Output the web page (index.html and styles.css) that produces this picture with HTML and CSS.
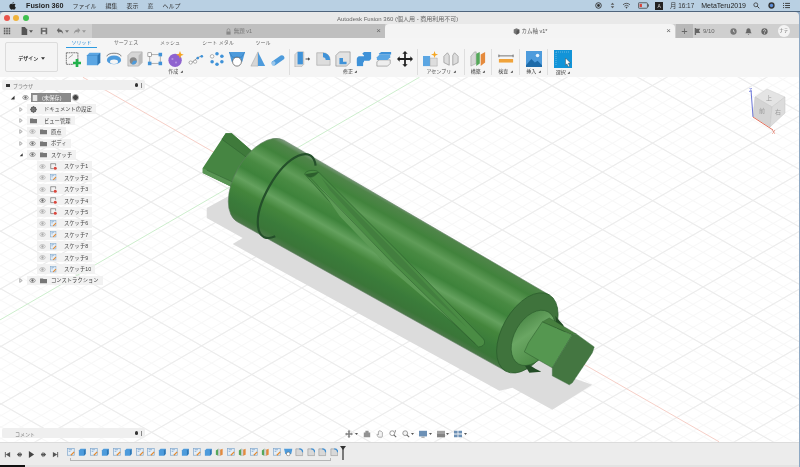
FILE: index.html
```html
<!DOCTYPE html>
<html lang="ja">
<head>
<meta charset="utf-8">
<title>Autodesk Fusion 360</title>
<link rel="stylesheet" href="styles.css">
</head>
<body>
<svg class="defs" aria-hidden="true">
  <defs>
    <symbol id="eye" viewBox="0 0 12 8"><path d="M.5 4C2.500 1 4.300.6 6 .6S9.500 1 11.500 4C9.500 7 7.700 7.400 6 7.400S2.500 7 .5 4Z" fill="#e8e8e8" stroke="currentColor" stroke-width="1"/><circle cx="6" cy="4" r="2" fill="currentColor"/></symbol>
    <symbol id="folder" viewBox="0 0 10 8"><path d="M0 1h4l1 1h5v6H0Z" fill="#777"/></symbol>
    <symbol id="arrow" viewBox="0 0 6 8"><path d="M1 1l4 3-4 3Z" fill="#f4f4f4" stroke="#777" stroke-width=".9"/></symbol>
    <symbol id="down" viewBox="0 0 6 6"><path d="M5.500 1v4.500H1Z" fill="#333"/></symbol>
    <symbol id="gear" viewBox="0 0 10 10"><circle cx="5" cy="5" r="3.200" fill="none" stroke="#666" stroke-width="2"/><path d="M5 0v10M0 5h10M1.500 1.500l7 7M8.500 1.500l-7 7" stroke="#666" stroke-width="1.200"/></symbol>
    <symbol id="sklock" viewBox="0 0 10 10"><path d="M1 1h7M1 1v7M1 8h4M8 1v3" stroke="#555" stroke-width=".8" fill="none"/><circle cx="7.500" cy="7.500" r="2.200" fill="#d9463c"/></symbol>
    <symbol id="skedit" viewBox="0 0 10 10"><rect x=".5" y=".5" width="8" height="8" fill="#e6eef6" stroke="#7fa6cc" stroke-width=".8"/><path d="M2 2h4M2 4h2" stroke="#6a9ccb" stroke-width=".8"/><path d="M4 8l4-4 1 1-4 4Z" fill="#e58a2e"/></symbol>
    <symbol id="extr" viewBox="0 0 10 10"><path d="M1 3l2-2h6v6l-2 2H1Z" fill="#4d9bdc"/><path d="M7 3l2-2v6l-2 2Z" fill="#2f77b5"/></symbol>
    <symbol id="plane" viewBox="0 0 10 10"><path d="M1 3l3-2v8L1 8Z" fill="#55a85a"/><path d="M6 2l3-1v7L6 9Z" fill="#e58a3c"/><path d="M4 1l2 1v7L4 9Z" fill="#ddd" stroke="#999" stroke-width=".3"/></symbol>
    <symbol id="sweep" viewBox="0 0 10 10"><path d="M0 1h10L8.500 7H1.500Z" fill="#4d9bdc"/><circle cx="5" cy="7" r="2.200" fill="#fff" stroke="#555" stroke-width=".6"/></symbol>
    <symbol id="fillet" viewBox="0 0 10 10"><path d="M1 1h4a4 4 0 0 1 4 4v4H1Z" fill="#d8d8d8" stroke="#888" stroke-width=".6"/><path d="M5 1a4 4 0 0 1 4 4" stroke="#3f92d8" stroke-width="1.500" fill="none"/></symbol>
  </defs>
</svg>
<div class="app">
  <header class="menubar">
    <svg class="apple" viewBox="0 0 10 12"><path d="M7 0C6.800 1.500 5.800 2.400 4.700 2.500 4.800 1.200 5.800.2 7 0ZM5 3.200c.6 0 1.300-.6 2.300-.6 1 0 1.800.5 2.300 1.300-1.800 1-1.500 3.500.4 4.300-.6 1.500-1.600 3.300-2.700 3.300-.7 0-1-.5-1.900-.5s-1.300.5-1.900.5C2 11.500.3 8.900.3 6.400.3 4 1.700 2.700 3.100 2.700c.8 0 1.400.5 1.900.5Z" fill="#222"/></svg>
    <strong class="appname">Fusion 360</strong>
    <span class="menu m1">ファイル</span>
    <span class="menu">編集</span>
    <span class="menu">表示</span>
    <span class="menu">窓</span>
    <span class="menu">ヘルプ</span>
    <span class="status">
      <svg class="st" viewBox="0 0 10 10"><circle cx="5" cy="5" r="4" fill="none" stroke="#333" stroke-width="1.300"/><circle cx="5" cy="5" r="2" fill="#333"/></svg>
      <svg class="st" viewBox="0 0 10 10"><path d="M5 1l2.500 3h-5ZM5 9L2.500 6h5Z" fill="#555"/></svg>
      <svg class="st st-w" viewBox="0 0 12 10"><path d="M1 4a7 7 0 0 1 10 0M3 6a4.500 4.500 0 0 1 6 0" fill="none" stroke="#444" stroke-width="1.200"/><path d="M6 9.500L4.500 7.500a2 2 0 0 1 3 0Z" fill="#444"/></svg>
      <svg class="st st-b" viewBox="0 0 14 8"><rect x=".5" y=".5" width="11.500" height="7" rx="1" fill="none" stroke="#444"/><rect x="2" y="2" width="3" height="4" fill="#d8443a"/><rect x="12.500" y="2.500" width="1.200" height="3" fill="#444"/></svg>
      <span class="abox">A</span>
      <span class="clock">月 16:17</span>
      <b class="user">MetaTeru2019</b>
      <svg class="st st-s" viewBox="0 0 10 10"><circle cx="4" cy="4" r="2.800" fill="none" stroke="#333" stroke-width="1.100"/><path d="M6 6l3 3" stroke="#333" stroke-width="1.300"/></svg>
      <svg class="st st-g" viewBox="0 0 10 10"><circle cx="5" cy="5" r="4.500" fill="#333"/><circle cx="5" cy="5" r="2.400" fill="#5d8fdc"/></svg>
      <svg class="st st-g" viewBox="0 0 10 10"><path d="M0 2h1.500M3 2h7M0 5h1.500M3 5h7M0 8h1.500M3 8h7" stroke="#333" stroke-width="1.300"/></svg>
    </span>
  </header>

  <div class="window">
    <div class="titlebar">
      <i class="light red"></i><i class="light amber"></i><i class="light green"></i>
      <span class="wintitle">Autodesk Fusion 360 (個人用 - 商用利用不可)</span>
    </div>

    <div class="tabrow">
      <div class="quick">
        <svg class="qi" viewBox="0 0 10 10"><path d="M1 1h2v2H1ZM4 1h2v2H4ZM7 1h2v2H7ZM1 4h2v2H1ZM4 4h2v2H4ZM7 4h2v2H7ZM1 7h2v2H1ZM4 7h2v2H4ZM7 7h2v2H7Z" fill="#555"/></svg>
        <svg class="qi q-file" viewBox="0 0 10 10"><path d="M2 0h4l3 3v7H2Z" fill="#555"/></svg>
        <svg class="caret" viewBox="0 0 6 4"><path d="M0 0h6L3 4Z" fill="#555"/></svg>
        <svg class="qi q-save" viewBox="0 0 10 10"><path d="M1 1h8v8H1Z" fill="#666"/><rect x="3" y="2" width="4" height="2" fill="#ddd"/><rect x="3" y="6" width="4" height="3" fill="#ddd"/></svg>
        <svg class="qi q-undo" viewBox="0 0 10 10"><path d="M1 4l3-3v2c3 0 5 2 5 6-1-2-2-3-5-3v2Z" fill="#666"/></svg>
        <svg class="caret" viewBox="0 0 6 4"><path d="M0 0h6L3 4Z" fill="#777"/></svg>
        <svg class="qi q-redo" viewBox="0 0 10 10"><path d="M9 4L6 1v2C3 3 1 5 1 9c1-2 2-3 5-3v2Z" fill="#999"/></svg>
        <svg class="caret" viewBox="0 0 6 4"><path d="M0 0h6L3 4Z" fill="#999"/></svg>
      </div>
      <div class="tab tab-off">
        <svg class="tabicon" viewBox="0 0 10 10"><path d="M3 5V3a2 2 0 0 1 4 0v2" fill="none" stroke="#888"/><rect x="2" y="5" width="6" height="4.500" fill="#888"/></svg>
        <span>無題 v1</span>
        <span class="tabx">×</span>
      </div>
      <div class="tab tab-on">
        <svg class="tabicon" viewBox="0 0 10 10"><path d="M1 2l4-1.500L9 2v5L5 9.500 1 7Z" fill="#777"/><path d="M5 4L9 2v5L5 9.500Z" fill="#555"/></svg>
        <span>カム軸 v1*</span>
        <span class="tabx">×</span>
      </div>
      <div class="plus">+</div>
      <div class="tabtools">
        <svg class="ti ti-flag" viewBox="0 0 10 10"><path d="M1 0h2v10H1ZM3 1h6L7 4l2 3H3Z" fill="#666"/></svg>
        <span class="count">9/10</span>
        <svg class="ti ti-clock" viewBox="0 0 10 10"><circle cx="5" cy="5" r="4.500" fill="#777"/><path d="M5 2.500V5l2 1" stroke="#eee" fill="none"/></svg>
        <svg class="ti ti-bell" viewBox="0 0 10 10"><path d="M5 .5c2 0 3 1.500 3 3.500 0 2 1 3 1.500 3.500h-9C1 7 2 6 2 4 2 2 3 .5 5 .5ZM4 8.500h2a1 1 0 0 1-2 0Z" fill="#666"/></svg>
        <svg class="ti ti-help" viewBox="0 0 10 10"><circle cx="5" cy="5" r="4.500" fill="#666"/><path d="M3.500 4a1.500 1.500 0 1 1 2.200 1.300C5 5.700 5 6 5 6.500M5 7.500v1" stroke="#eee" fill="none"/></svg>
        <span class="avatar">ナテ</span>
      </div>
    </div>

    <div class="toolbar">
      <button class="design">デザイン <svg class="caret" viewBox="0 0 6 4"><path d="M0 0h6L3 4Z" fill="#333"/></svg></button>
      <div class="tools">
        <div class="modes">
          <span class="mode mode-on m-a">ソリッド</span>
          <span class="mode m-b">サーフェス</span>
          <span class="mode m-c">メッシュ</span>
          <span class="mode m-d">シート メタル</span>
          <span class="mode m-e">ツール</span>
        </div>
        <div class="groups">
          <div class="group g-create">
            <div class="icons">
              <svg class="ic" viewBox="0 0 18 18"><path d="M1.500 2h13v10M1.500 2v13h8" fill="none" stroke="#666" stroke-dasharray="2 .6"/><path d="M4 8l5-4" stroke="#999"/><path d="M12 9h3v3h3v3h-3v3h-3v-3H9v-3h3Z" fill="#22b14c"/></svg>
              <svg class="ic" viewBox="0 0 18 18"><path d="M1 5l3-3h12v11l-3 3H1Z" fill="#5ba6e3"/><path d="M13 5l3-3v11l-3 3Z" fill="#2f77b5"/><path d="M1 5h12v11" fill="none" stroke="#3d87c4" stroke-width=".6"/></svg>
              <svg class="ic" viewBox="0 0 18 18"><ellipse cx="9" cy="10" rx="8" ry="5" fill="#4d9bdc"/><ellipse cx="9" cy="12" rx="4.500" ry="2.500" fill="#f5f5f5"/><path d="M1 6a8 3.500 0 0 1 16 0" fill="none" stroke="#777" stroke-width="1"/></svg>
              <svg class="ic" viewBox="0 0 18 18"><path d="M1 5l4-4h12v12l-4 4H1Z" fill="#d6d6d6" stroke="#999" stroke-width=".6"/><path d="M13 5l4-4v12l-4 4Z" fill="#bbb"/><circle cx="7" cy="11" r="4" fill="#888"/><path d="M7 11h4a4 4 0 0 1-6 3.500Z" fill="#4d9bdc"/></svg>
              <svg class="ic" viewBox="0 0 18 18"><path d="M3 4h12M3 14h12M3 4v10M15 4v10" stroke="#888" stroke-width=".7" fill="none"/><rect x="1" y="2" width="4" height="4" fill="#fff" stroke="#666" stroke-width=".6"/><rect x="13" y="2" width="4" height="4" fill="#3f92d8"/><rect x="1" y="12" width="4" height="4" fill="#3f92d8"/><rect x="13" y="12" width="4" height="4" fill="#3f92d8"/></svg>
              <svg class="ic" viewBox="0 0 18 18"><circle cx="8" cy="10.500" r="7.500" fill="#8f63cf"/><circle cx="5" cy="9" r="1.200" fill="#b394e2"/><circle cx="9" cy="13" r="1.200" fill="#b394e2"/><path d="M13.500 0l1.200 3 3 1.200-3 1.200-1.200 3-1.200-3-3-1.200 3-1.200Z" fill="#f5a623"/></svg>
              <svg class="ic" viewBox="0 0 18 18"><path d="M1 13c5 2 7-6 14-7" fill="none" stroke="#888"/><circle cx="3" cy="13" r="1.800" fill="#fff" stroke="#777" stroke-width=".6"/><circle cx="8" cy="12" r="1.800" fill="#fff" stroke="#777" stroke-width=".6"/><circle cx="11" cy="8" r="1.500" fill="#3f92d8"/><circle cx="15.500" cy="6" r="1.500" fill="#3f92d8"/></svg>
              <svg class="ic" viewBox="0 0 18 18"><circle cx="9" cy="3" r="2" fill="#3f92d8"/><circle cx="14.500" cy="6" r="2" fill="#3f92d8"/><circle cx="14.500" cy="12" r="2" fill="#3f92d8"/><circle cx="9" cy="15" r="2" fill="#3f92d8"/><circle cx="3.500" cy="12" r="2" fill="#3f92d8"/><circle cx="3.500" cy="6" r="2" fill="#fff" stroke="#777" stroke-width=".6"/></svg>
              <svg class="ic" viewBox="0 0 18 18"><path d="M0 1h18l-3 11H3Z" fill="#4d9bdc"/><path d="M0 1l4 6h10l4-6" fill="none" stroke="#2f77b5" stroke-width=".6"/><circle cx="9" cy="12" r="5" fill="#fff" stroke="#555" stroke-width=".8"/></svg>
              <svg class="ic" viewBox="0 0 18 18"><path d="M9 1L1 17h8Z" fill="#d6d6d6" stroke="#999" stroke-width=".5"/><path d="M9 1l8 16H9Z" fill="#4d9bdc"/></svg>
              <svg class="ic" viewBox="0 0 18 18"><path d="M2 12L12 5a3 3 0 0 1 4 4L6 16a3 3 0 0 1-4-4Z" fill="#4d9bdc"/><ellipse cx="4" cy="14" rx="2" ry="2.600" transform="rotate(30 4 14)" fill="#9cc8ec"/></svg>
            </div>
            <span class="glabel">作成 <svg class="tri"><use href="#down"/></svg></span>
          </div>
          <div class="group g-modify">
            <div class="icons">
              <svg class="ic" viewBox="0 0 18 18"><path d="M1 4l3-3h7v14l-3 3H1Z" fill="#ddd" stroke="#999" stroke-width=".5"/><path d="M4 1h6v14H4Z" fill="#3f92d8"/><path d="M13 9h4" stroke="#333"/><path d="M16 7l2 2-2 2Z" fill="#333"/></svg>
              <svg class="ic" viewBox="0 0 18 18"><path d="M2 2h7a8 8 0 0 1 8 8v6H2Z" fill="#ddd" stroke="#999" stroke-width=".6"/><path d="M9 2a8 8 0 0 1 8 8l-5 0a3 3 0 0 0-3-3Z" fill="#3f92d8"/></svg>
              <svg class="ic" viewBox="0 0 18 18"><path d="M1 5l4-4h12v12l-4 4H1Z" fill="#e2e2e2" stroke="#888" stroke-width=".7"/><path d="M5 8h4v4h4v3H5Z" fill="#3f92d8"/></svg>
              <svg class="ic" viewBox="0 0 18 18"><path d="M1 8l2-2h6v6l-2 2H1Z" fill="#3f92d8"/><path d="M7 3l2-2h8v8l-2 2h-6V5Z" fill="#3f92d8"/><path d="M1 9h7v8H1Z" fill="#3f92d8"/></svg>
              <svg class="ic" viewBox="0 0 18 18"><path d="M1 12l3-2h12v4l-3 3H1Z" fill="#eee" stroke="#888" stroke-width=".7"/><path d="M1 7l3-3h12v3l-3 3H1Z" fill="#5ba6e3"/><path d="M3 3l3-2h11v3H4Z" fill="#3f92d8"/></svg>
              <svg class="ic" viewBox="0 0 18 18"><path d="M9 0l3 3h-2v5h5V6l3 3-3 3v-2h-5v5h2l-3 3-3-3h2v-5H3v2L0 9l3-3v2h5V3H6Z" fill="#222"/></svg>
            </div>
            <span class="glabel gl-mod">修正 <svg class="tri"><use href="#down"/></svg></span>
          </div>
          <div class="group g-assy">
            <div class="icons">
              <svg class="ic" viewBox="0 0 18 18"><path d="M0 5h8v12H0Z" fill="#5ba6e3"/><path d="M8 8h8v9H8Z" fill="#ddd" stroke="#999" stroke-width=".5"/><path d="M0 5h8" stroke="#fff"/><path d="M13 0l1 3 3 1-3 1-1 3-1-3-3-1 3-1Z" fill="#f5a623"/></svg>
              <svg class="ic" viewBox="0 0 18 18"><path d="M1 6l4-4 2 3v11l-6-3ZM17 6l-4-4-2 3v11l6-3Z" fill="#ddd" stroke="#888" stroke-width=".7"/></svg>
            </div>
            <span class="glabel">アセンブリ <svg class="tri"><use href="#down"/></svg></span>
          </div>
          <div class="group g-one g-build">
            <svg class="ic" viewBox="0 0 18 18"><path d="M1 6l4-5h2v13l-6 3Z" fill="#d8d8d8" stroke="#888" stroke-width=".5"/><path d="M7 3l4-2v13l-4 3Z" fill="#55a85a"/><path d="M12 4l5-3v12l-5 4Z" fill="#e58a3c"/></svg>
            <span class="glabel">構築 <svg class="tri"><use href="#down"/></svg></span>
          </div>
          <div class="group g-one g-insp">
            <svg class="ic" viewBox="0 0 18 18"><path d="M1 4v3M17 4v3M1 5.500h16" stroke="#666" fill="none"/><rect x="1" y="9" width="16" height="4" fill="#f0a33a"/></svg>
            <span class="glabel">検査 <svg class="tri"><use href="#down"/></svg></span>
          </div>
          <div class="group g-one g-ins">
            <svg class="ic" viewBox="0 0 18 18"><rect width="18" height="18" fill="#4d9bdc"/><circle cx="13" cy="5" r="2" fill="#e7f2fb"/><path d="M0 16l6-7 4 4 3-2 5 5v2H0Z" fill="#1d6aa8"/></svg>
            <span class="glabel">挿入 <svg class="tri"><use href="#down"/></svg></span>
          </div>
          <div class="group g-one g-sel">
            <svg class="ic ic-sel" viewBox="0 0 18 18"><rect width="18" height="18" fill="#1294d8"/><path d="M2 2h14M2 2v13" stroke="#8cc8ea" stroke-width=".7" stroke-dasharray="1 1"/><path d="M11.500 8l5 5-2.200.2 1.300 3-1.400.6-1.300-3-1.400 1.400Z" fill="#fff" stroke="#333" stroke-width=".4"/></svg>
            <span class="glabel">選択 <svg class="tri"><use href="#down"/></svg></span>
          </div>
        </div>
      </div>
    </div>

    <main class="viewport">
      <svg class="canvas" viewBox="0 77 800 365" aria-hidden="true">
        <defs>
          <pattern id="gminA" width="10" height="10" patternUnits="userSpaceOnUse" patternTransform="rotate(29.700)"><path d="M0 .5H10" stroke="#f7f7f7" stroke-width="1"/></pattern>
          <pattern id="gminB" width="10" height="10" patternUnits="userSpaceOnUse" patternTransform="rotate(-30)"><path d="M0 .5H10" stroke="#f7f7f7" stroke-width="1"/></pattern>
          <pattern id="gmajA" width="50" height="50" patternUnits="userSpaceOnUse" patternTransform="rotate(29.700)"><path d="M0 .5H50" stroke="#ebebeb" stroke-width="1"/></pattern>
          <pattern id="gmajB" width="50" height="50" patternUnits="userSpaceOnUse" patternTransform="rotate(-30)"><path d="M0 .5H50" stroke="#ebebeb" stroke-width="1"/></pattern>
          <linearGradient id="body" gradientUnits="userSpaceOnUse" x1="284" y1="140" x2="238" y2="222">
            <stop offset="0" stop-color="#7f9a80"/>
            <stop offset=".05" stop-color="#4f8549"/>
            <stop offset=".16" stop-color="#41833c"/>
            <stop offset=".27" stop-color="#5f9c58"/>
            <stop offset=".36" stop-color="#488a42"/>
            <stop offset=".47" stop-color="#3e833b"/>
            <stop offset=".58" stop-color="#64a15e"/>
            <stop offset=".68" stop-color="#44863c"/>
            <stop offset=".82" stop-color="#3a7b3a"/>
            <stop offset=".93" stop-color="#3a7638"/>
            <stop offset="1" stop-color="#50794d"/>
          </linearGradient>
          <linearGradient id="hub" gradientUnits="userSpaceOnUse" x1="548" y1="312" x2="522" y2="365">
            <stop offset="0" stop-color="#427f3e"/>
            <stop offset=".4" stop-color="#6aa663"/>
            <stop offset="1" stop-color="#45853f"/>
          </linearGradient>
        </defs>
        <rect x="0" y="77" width="800" height="365" fill="#fff"/>
        <rect x="0" y="77" width="800" height="365" fill="url(#gminA)"/>
        <rect x="0" y="77" width="800" height="365" fill="url(#gminB)"/>
        <rect x="0" y="77" width="800" height="365" fill="url(#gmajA)"/>
        <rect x="0" y="77" width="800" height="365" fill="url(#gmajB)"/>
        <path d="M83 77L720 442" stroke="#f6cfc7" stroke-width="1"/>
        <path d="M0 320L420 77" stroke="#cdeecd" stroke-width="1"/>

        <path class="shadow" d="M207 208V218L243 238 233 244 258 258 500 391 513 388 553 410 593 385 573 378 560 370 240 190Z"/>

        <!-- left square shaft -->
        <path d="M226 133L232 133 256 154 236 190 230 186 203 173V168Z" fill="#468542"/>
        <path d="M226 133L232 133 256 154 248 158 222 139Z" fill="#3f7a3b"/>
        <path d="M203 168L233 182 230 186 203 173Z" fill="#5a9655"/>
        <path d="M222 139L248 158M207 170L233 182" stroke="#2f6330" stroke-width=".6" fill="none"/>

        <!-- body -->
        <path d="M284 140L550 295 506 371 238 222A47 26 -60.300 0 1 284 140Z" fill="url(#body)" stroke="#5a7a5c" stroke-width=".6"/>
        <path d="M316 165.500A47 20 -60.300 1 0 275.600 236.300" fill="none" stroke="#24502a" stroke-width="2.200"/>

        <!-- slot -->
        <path d="M305 174C306 170 316 169 319 172L400 253 484 339C487 343 484 347 479 347L400 273 383 260Z" fill="#4a8c44" stroke="#2a5c2c" stroke-width=".6"/>
        <path d="M322 178L400 256 468 328 396 262 330 190Z" fill="#437f3f"/>
        <path d="M318 184L392 262 458 326 392 270 340 216Z" fill="#5c9a55"/>
        <path d="M306 174C309 179 314 178 319 172" fill="#2c5f2c" stroke="#2a5c2c" stroke-width=".5"/>
        <path d="M311 178L392 262 476 344" fill="none" stroke="#2a5c2c" stroke-width=".5"/>

        <!-- right flange -->
        <ellipse cx="528" cy="333" rx="44" ry="25" transform="rotate(-60.300 528 333)" fill="#3f733c" stroke="#2a5c2c" stroke-width=".7"/>
        <path d="M556 316l8 9 2 8-8-3ZM522 360l14 9 6 3-12 1Z" fill="#234c26"/>
        <ellipse cx="534" cy="338" rx="30" ry="19" transform="rotate(-60.300 534 338)" fill="url(#hub)" stroke="#2a5c2c" stroke-width=".6"/>

        <!-- right square shaft -->
        <path d="M543 322L550 318 567 328 577 334 573 335Z" fill="#47803f" stroke="#2a5a2a" stroke-width=".4"/>
        <path d="M543 322L573 335 553 368 525 352 529 343Z" fill="#559750" stroke="#2a5a2a" stroke-width=".5"/>
        <path d="M573 335L577 334 595 347 593 353 573 383 570 385 553 376 553 368Z" fill="#447641" stroke="#36683a" stroke-width=".4"/>
      </svg>

      <section class="panel browser">
        <div class="phead">
          <span class="pmark"></span><span class="ptitle">ブラウザ</span><i class="pdot"></i><i class="pgrip"></i>
        </div>
        <ul class="tree">
          <li class="row lv0"><svg class="tw"><use href="#down"/></svg><svg class="eye"><use href="#eye"/></svg><span class="rootlabel"><svg class="ricon" viewBox="0 0 8 8"><rect x="1" width="6" height="8" fill="#e8e8e8"/></svg>(未保存)</span><span class="radio"></span></li>
          <li class="row lv1"><svg class="tw"><use href="#arrow"/></svg><span class="pill pill-noeye"><svg class="fi"><use href="#gear"/></svg><span>ドキュメントの設定</span></span></li>
          <li class="row lv1"><svg class="tw"><use href="#arrow"/></svg><span class="pill pill-noeye"><svg class="fi"><use href="#folder"/></svg><span>ビュー管理</span></span></li>
          <li class="row lv1"><svg class="tw"><use href="#arrow"/></svg><span class="pill"><svg class="eye off"><use href="#eye"/></svg><svg class="fi"><use href="#folder"/></svg><span>原点</span></span></li>
          <li class="row lv1"><svg class="tw"><use href="#arrow"/></svg><span class="pill"><svg class="eye"><use href="#eye"/></svg><svg class="fi"><use href="#folder"/></svg><span>ボディ</span></span></li>
          <li class="row lv1"><svg class="tw"><use href="#down"/></svg><span class="pill"><svg class="eye"><use href="#eye"/></svg><svg class="fi"><use href="#folder"/></svg><span>スケッチ</span></span></li>
          <li class="row lv2"><span class="pill"><svg class="eye off"><use href="#eye"/></svg><svg class="fi"><use href="#sklock"/></svg><span>スケッチ1</span></span></li>
          <li class="row lv2"><span class="pill"><svg class="eye off"><use href="#eye"/></svg><svg class="fi"><use href="#skedit"/></svg><span>スケッチ2</span></span></li>
          <li class="row lv2"><span class="pill"><svg class="eye off"><use href="#eye"/></svg><svg class="fi"><use href="#sklock"/></svg><span>スケッチ3</span></span></li>
          <li class="row lv2"><span class="pill"><svg class="eye"><use href="#eye"/></svg><svg class="fi"><use href="#sklock"/></svg><span>スケッチ4</span></span></li>
          <li class="row lv2"><span class="pill"><svg class="eye off"><use href="#eye"/></svg><svg class="fi"><use href="#sklock"/></svg><span>スケッチ5</span></span></li>
          <li class="row lv2"><span class="pill"><svg class="eye off"><use href="#eye"/></svg><svg class="fi"><use href="#skedit"/></svg><span>スケッチ6</span></span></li>
          <li class="row lv2"><span class="pill"><svg class="eye off"><use href="#eye"/></svg><svg class="fi"><use href="#skedit"/></svg><span>スケッチ7</span></span></li>
          <li class="row lv2"><span class="pill"><svg class="eye off"><use href="#eye"/></svg><svg class="fi"><use href="#skedit"/></svg><span>スケッチ8</span></span></li>
          <li class="row lv2"><span class="pill"><svg class="eye off"><use href="#eye"/></svg><svg class="fi"><use href="#skedit"/></svg><span>スケッチ9</span></span></li>
          <li class="row lv2"><span class="pill"><svg class="eye off"><use href="#eye"/></svg><svg class="fi"><use href="#skedit"/></svg><span>スケッチ10</span></span></li>
          <li class="row lv1"><svg class="tw"><use href="#arrow"/></svg><span class="pill"><svg class="eye"><use href="#eye"/></svg><svg class="fi"><use href="#folder"/></svg><span>コンストラクション</span></span></li>
        </ul>
      </section>

      <div class="viewcube">
        <svg class="cube" viewBox="745 85 48 50">
          <path d="M755 97L767 89 785 97 772 107Z" fill="#e4e4e4" stroke="#cfcfcf" stroke-width=".5"/>
          <path d="M755 97L772 107 770 127 753 116Z" fill="#d4d4d4" stroke="#c4c4c4" stroke-width=".5"/>
          <path d="M772 107L785 97 785 113 770 127Z" fill="#dcdcdc" stroke="#c4c4c4" stroke-width=".5"/>
          <path d="M751 90L753 117" stroke="#6b76d8" stroke-width="1"/>
          <path d="M753 117L773 130" stroke="#e2705c" stroke-width="1"/>
          <text x="749" y="92" class="axis az">Z</text>
          <text x="772" y="134" class="axis ax">X</text>
          <text x="766" y="100" class="cubet">上</text>
          <text x="759" y="113" class="cubet">前</text>
          <text x="775" y="114" class="cubet">右</text>
        </svg>
      </div>

      <section class="panel comments">
        <div class="phead">
          <span class="ptitle ptitle-c">コメント</span><i class="pdot"></i><i class="pgrip"></i>
        </div>
      </section>

      <nav class="navbar">
        <svg class="nv" viewBox="0 0 10 10"><path d="M5 0l2 2H6v2h2V3l2 2-2 2V6H6v2h1L5 10 3 8h1V6H2v1L0 5l2-2v1h2V2H3Z" fill="#777"/></svg><svg class="cr" viewBox="0 0 6 4"><path d="M0 0h6L3 4Z" fill="#555"/></svg>
        <svg class="nv" viewBox="0 0 10 10"><path d="M1 3h8v6H1ZM3 3V1h4v2" fill="#888"/></svg>
        <svg class="nv" viewBox="0 0 10 10"><path d="M3 9C1 7 1 5 2 5l1 1V2l1-.5V1l1 0 1 .5L7 2l1 1v3c0 2 0 3-1 3Z" fill="#f2f2f2" stroke="#777" stroke-width=".8"/></svg>
        <svg class="nv" viewBox="0 0 10 10"><circle cx="4" cy="4" r="3" fill="#fff" stroke="#777"/><path d="M6 6l3 3" stroke="#555" stroke-width="1.300"/><path d="M8 0v3" stroke="#777"/></svg>
        <svg class="nv" viewBox="0 0 10 10"><circle cx="4" cy="4" r="3" fill="#f2f2f2" stroke="#777"/><path d="M6 6l3 3" stroke="#555" stroke-width="1.300"/></svg><svg class="cr" viewBox="0 0 6 4"><path d="M0 0h6L3 4Z" fill="#555"/></svg>
        <svg class="nv nv-w" viewBox="0 0 10 10"><rect y="1" width="10" height="7" fill="#5d84ad"/><path d="M3 9h4" stroke="#777"/></svg><svg class="cr" viewBox="0 0 6 4"><path d="M0 0h6L3 4Z" fill="#555"/></svg>
        <svg class="nv" viewBox="0 0 10 10"><rect y="1" width="10" height="8" fill="#999"/><rect y="5" width="10" height="4" fill="#777"/></svg><svg class="cr" viewBox="0 0 6 4"><path d="M0 0h6L3 4Z" fill="#555"/></svg>
        <svg class="nv" viewBox="0 0 10 10"><path d="M0 1h4.500v3.500H0ZM5.500 1H10v3.500H5.500ZM0 5.500h4.500V9H0ZM5.500 5.500H10V9H5.500Z" fill="#5d84ad"/></svg><svg class="cr" viewBox="0 0 6 4"><path d="M0 0h6L3 4Z" fill="#555"/></svg>
      </nav>
    </main>

    <footer class="timeline">
      <div class="controls">
        <svg class="tc" viewBox="0 0 8 8"><path d="M1 1h1v6H1ZM7 1v6L2 4Z" fill="#555"/></svg>
        <svg class="tc" viewBox="0 0 8 8"><path d="M1 4l3-3v2h1V1l2 3-2 3V5H4v2Z" fill="#555"/></svg>
        <svg class="tc" viewBox="0 0 8 8"><path d="M1 0l6 4-6 4Z" fill="#444"/></svg>
        <svg class="tc" viewBox="0 0 8 8"><path d="M7 4L4 1v2H3V1L1 4l2 3V5h1v2Z" fill="#555"/></svg>
        <svg class="tc" viewBox="0 0 8 8"><path d="M7 1H6v6h1ZM1 1v6l5-3Z" fill="#555"/></svg>
      </div>
      <div class="track">
        <div class="items">
          <svg class="tl"><use href="#skedit"/></svg><svg class="tl"><use href="#extr"/></svg><svg class="tl"><use href="#skedit"/></svg><svg class="tl"><use href="#extr"/></svg><svg class="tl"><use href="#skedit"/></svg><svg class="tl"><use href="#extr"/></svg><svg class="tl"><use href="#skedit"/></svg><svg class="tl"><use href="#skedit"/></svg><svg class="tl"><use href="#extr"/></svg><svg class="tl"><use href="#skedit"/></svg><svg class="tl"><use href="#extr"/></svg><svg class="tl"><use href="#skedit"/></svg><svg class="tl"><use href="#extr"/></svg><svg class="tl"><use href="#plane"/></svg><svg class="tl"><use href="#skedit"/></svg><svg class="tl"><use href="#plane"/></svg><svg class="tl"><use href="#skedit"/></svg><svg class="tl"><use href="#plane"/></svg><svg class="tl"><use href="#skedit"/></svg><svg class="tl"><use href="#sweep"/></svg><svg class="tl"><use href="#fillet"/></svg><svg class="tl"><use href="#fillet"/></svg><svg class="tl"><use href="#fillet"/></svg><svg class="tl"><use href="#fillet"/></svg>
        </div>
        <div class="bracket"></div>
      </div>
      <div class="marker"></div>
    </footer>
  </div>
  <div class="foot"></div>
</div>
</body>
</html>
```

FILE: styles.css
```css
* { box-sizing: border-box; }
html, body { margin: 0; padding: 0; }
body {
  width: 800px;
  height: 467px;
  overflow: hidden;
  background: #8fa9c4;
  font-family: "Liberation Sans", "Noto Sans CJK JP", sans-serif;
  color: #444;
}
.defs { position: absolute; width: 0; height: 0; }
.app { width: 800px; height: 467px; display: flex; flex-direction: column; filter: blur(.45px); }

/* mac menu bar */
.menubar {
  height: 12px;
  flex: none;
  display: flex;
  align-items: center;
  background: #b9d0e3;
  border-bottom: 1px solid #4f647c;
  padding-left: 9px;
  font-size: 6px;
  color: #333;
}
.apple { width: 7px; height: 8px; }
.appname { margin-left: 10px; font-size: 7.200px; color: #222; }
.menu { margin-left: 9px; }
.m1 { margin-left: 9px; }
.status { margin-left: auto; display: flex; align-items: center; padding-right: 10px; }
.st { width: 7px; height: 7px; margin-left: 7px; }
.st-w { width: 9px; margin-left: 6px; }
.st-b { width: 11px; margin-left: 7px; }
.st-s { margin-left: 7px; }
.st-g { margin-left: 8px; }
.abox { width: 8px; height: 8px; margin-left: 6px; background: #222; color: #ddd; font-size: 5px; text-align: center; line-height: 8px; }
.clock { margin-left: 7px; font-size: 6.400px; }
.user { margin-left: 7px; font-weight: 400; font-size: 7px; color: #222; }

/* window */
.window { flex: 1; display: flex; flex-direction: column; margin-right: 1px; min-height: 0; }
.titlebar {
  height: 12px;
  display: flex;
  align-items: center;
  justify-content: flex-start;
  padding-left: 3.500px;
  gap: 3.500px;
  background: #e9e9e9;
  border-radius: 4px 4px 0 0;
  position: relative;
}
.light { width: 6px; height: 6px; border-radius: 50%; }
.red { background: #e9544b; }
.amber { background: #f0b33b; }
.green { background: #3fc04e; }
.wintitle { position: absolute; left: 337px; top: 1.500px; font-size: 6px; color: #666; white-space: nowrap; }

.tabrow { height: 14px; display: flex; background: #cfcfcf; align-items: stretch; }
.quick { width: 92px; flex: none; display: flex; align-items: center; padding-left: 3px; }
.qi { width: 8px; height: 8px; }
.q-file { margin-left: 9px; }
.q-save { margin-left: 7px; }
.q-undo { margin-left: 8px; }
.q-redo { margin-left: 4px; }
.caret { width: 4px; height: 3px; margin-left: 1px; }
.tab { position: relative; display: flex; align-items: center; justify-content: center; font-size: 5.500px; }
.tab-off { width: 293px; background: #bfbfbf; color: #777; }
.tab-on { width: 290px; background: #f4f4f4; color: #555; border-radius: 4px 4px 0 0; }
.tabicon { width: 7px; height: 7px; margin-right: 2px; }
.tabx { position: absolute; right: 4px; top: 2px; font-size: 8px; line-height: 10px; color: #666; }
.plus { width: 17px; margin-left: 1px; background: #b9b9b9; color: #666; font-size: 11px; line-height: 14px; text-align: center; }
.tabtools { flex: 1; display: flex; align-items: center; background: #cfcfcf; font-size: 6px; color: #666; }
.ti { width: 7px; height: 7px; }
.ti-flag { margin-left: 1px; }
.count { margin-left: 2px; }
.ti-clock { margin-left: 15px; }
.ti-bell { margin-left: 8px; }
.ti-help { margin-left: 9px; }
.avatar { width: 12px; height: 12px; margin-left: 10px; border-radius: 50%; background: #f3f3f3; font-size: 4.500px; line-height: 12px; text-align: center; }

/* toolbar */
.toolbar { height: 39px; flex: none; display: flex; background: #f5f5f5; padding: 4px 0 0 5px; }
.design {
  width: 53px;
  height: 30px;
  padding: 0;
  margin: 0;
  background: #f4f4f4;
  border: 1px solid #dcdcdc;
  border-radius: 2px;
  font: 700 5px "Liberation Sans", "Noto Sans CJK JP", sans-serif;
  color: #333;
}
.tools { margin: -4px 0 0 4px; flex: 1; }
.modes { height: 10px; display: flex; margin-left: 4px; font-size: 5px; color: #666; }
.mode { text-align: center; line-height: 9px; white-space: nowrap; }
.mode-on { color: #2f8fd8; border-bottom: 1.500px solid #2f9be0; }
.m-a { width: 31px; }
.m-b { width: 58px; }
.m-c { width: 30px; }
.m-d { width: 66px; }
.m-e { width: 24px; }
.groups { display: flex; height: 27px; margin-top: 1px; }
.group { display: flex; flex-direction: column; align-items: center; height: 26px; border-right: 1px solid #dedede; flex: none; }
.icons { display: flex; align-items: center; height: 19px; }
.ic { width: 16px; height: 16px; margin: 0 2.250px; flex: none; display: block; }
.glabel { font-size: 5px; line-height: 7px; white-space: nowrap; color: #444; }
.tri { width: 3px; height: 3px; }
.g-create { width: 228px; }
.g-modify { width: 128px; padding-left: 2px; align-items: flex-start; }
.gl-mod { margin-left: 51px; }
.g-assy { width: 47px; }
.g-one { padding-top: 1.500px; }
.g-build { width: 27px; }
.g-insp { width: 28px; }
.g-ins { width: 28px; }
.g-sel { width: 30px; border-right: 0; }
.ic-sel { width: 18px; height: 18px; margin-top: -1px; }
.g-one .glabel { margin-top: 1.500px; }

/* viewport */
.viewport { position: relative; height: 365px; flex: none; overflow: hidden; background: #fff; }
.canvas { display: block; width: 799px; height: 365px; }
.shadow { fill: #dcdcdc; }
.panel { position: absolute; left: 2px; width: 143px; }
.browser { top: 3px; }
.comments { top: 351px; }
.phead { height: 10px; display: flex; align-items: center; background: #efefef; border-radius: 2px; font-size: 5px; color: #777; padding: 0 1px 0 4px; }
.pmark { width: 4px; height: 3px; background: #333; margin-right: 3px; }
.ptitle-c { margin-left: 9px; }
.pdot { width: 3.500px; height: 3.500px; border-radius: 50%; background: #333; margin-left: auto; }
.pgrip { width: 1px; height: 5px; background: #888; margin: 0 2px 0 3px; }
.tree { list-style: none; margin: 2px 0 0; padding: 0; font-size: 5.300px; color: #444; }
.row { height: 11.430px; display: flex; align-items: center; white-space: nowrap; }
.lv0 { padding-left: 8px; }
.lv1 { padding-left: 17px; }
.lv2 { padding-left: 35px; }
.tw { width: 4px; height: 5px; flex: none; }
.lv0 .tw { width: 5px; height: 5px; }
.eye { width: 7px; height: 5px; color: #666; flex: none; }
.eye.off { color: #aaa; }
.lv0 .eye { margin-left: 7px; }
.rootlabel { margin-left: 2px; height: 8.500px; padding: 0 4px 0 1px; width: 40px; background: #8a8a8a; color: #f2f2f2; display: flex; align-items: center; gap: 4px; }
.ricon { width: 6px; height: 6px; }
.radio { width: 7px; height: 7px; margin-left: 1px; border-radius: 50%; border: 1.500px solid #bbb; background: #444; }
.pill { display: flex; align-items: center; height: 9.500px; background: rgba(240, 240, 240, .85); padding: 0 4px 0 2px; margin-left: 4px; }
.pill span { margin-left: 4px; }
.pill-noeye .fi { margin-left: 1px; }
.pill-noeye span { margin-left: 7px; }
.lv2 .pill { margin-left: 0; }
.fi { width: 7px; height: 7px; margin-left: 4px; flex: none; }
.lv2 .pill span { margin-left: 7px; }

.viewcube { position: absolute; left: 745px; top: 8px; width: 48px; height: 50px; }
.cube { width: 48px; height: 50px; display: block; }
.axis { font: 5px "Liberation Sans", sans-serif; }
.az { fill: #6b76d8; }
.ax { fill: #e2705c; }
.cubet { font: 6px "Noto Sans CJK JP", sans-serif; fill: #9a9a9a; }

.navbar { position: absolute; left: 345px; top: 353px; display: flex; align-items: center; height: 8px; }
.nv { width: 8px; height: 8px; margin-left: 5px; opacity: .9; }
.nv:first-child { margin-left: 0; }
.cr { width: 3px; height: 2px; margin-left: 1.500px; }

/* timeline */
.timeline { height: 23px; flex: none; display: flex; background: #ececec; border-top: 1px solid #dcdcdc; position: relative; }
.controls { width: 67px; flex: none; display: flex; align-items: center; padding-left: 4px; gap: 5px; }
.tc { width: 7px; height: 7px; }
.track { padding-top: 5px; width: 275px; flex: none; }
.items { display: flex; }
.tl { width: 8.500px; height: 8.500px; margin-right: 2.930px; flex: none; }
.bracket { width: 261px; margin: 1px 0 0 3px; height: 3px; border: 1px solid #b5b5b5; border-top: 0; }
.marker { width: 2px; height: 13px; background: #7a7a7a; margin-top: 4px; position: relative; }
.marker::before { content: ""; position: absolute; left: -2px; top: -1px; border: 3px solid transparent; border-top: 4px solid #333; }

.foot { height: 2px; flex: none; background: #e3e3e3; margin-right: 1px; border-left: 25px solid #111; }
```
